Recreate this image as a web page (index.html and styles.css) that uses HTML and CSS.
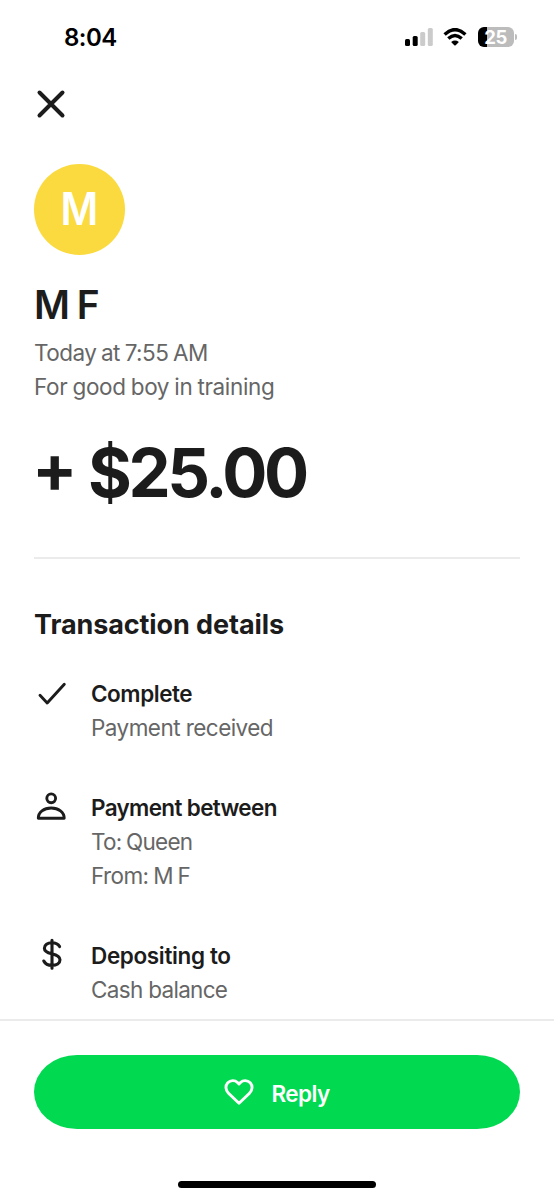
FILE: index.html
```html
<!DOCTYPE html>
<html lang="en">
<head>
<meta charset="utf-8">
<title>Transaction</title>
<link rel="stylesheet" href="styles.css">
</head>
<body>
<div class="screen">
  <header class="status">
    <span class="time">8:04</span>
    <div class="indicators">
      <svg class="signal" width="28" height="18" viewBox="0 0 28 18">
        <rect x="0" y="11" width="5" height="7" rx="1.5"/>
        <rect x="7.7" y="8" width="5" height="10" rx="1.5"/>
        <rect class="dim" x="15.2" y="4" width="5" height="14" rx="1.5"/>
        <rect class="dim" x="22.8" y="0" width="5" height="18" rx="1.5"/>
      </svg>
      <svg class="wifi" width="24" height="18" viewBox="0 0 24 18">
        <path d="M1.6 6.4Q12-3.2 22.4 6.4M5.3 10.6Q12 4.5 18.7 10.6"/>
        <path class="dot" d="M8.1 13.9Q12 11 15.9 13.9L12.7 17.2Q12 17.9 11.3 17.2Z"/>
      </svg>
      <div class="battery"><span class="level">25</span></div>
    </div>
  </header>
  <main class="content">
    <svg class="close" width="34" height="34" viewBox="0 0 34 34"><path d="M5.5 5.5L28.5 28.5M28.5 5.5L5.5 28.5"/></svg>
    <div class="avatar"><span class="initial">M</span></div>
    <h1 class="name">M F</h1>
    <p class="meta when">Today at 7:55 AM</p>
    <p class="meta note">For good boy in training</p>
    <p class="amount"><span class="plus">+</span><span>$25.00</span></p>
    <section class="details">
      <h2 class="heading">Transaction details</h2>
      <div class="row">
        <svg class="icon" width="34" height="34" viewBox="0 0 34 34"><path d="M6 18.3L13.2 26L30.3 7.2"/></svg>
        <div>
          <h3 class="label complete">Complete</h3>
          <p class="meta received">Payment received</p>
        </div>
      </div>
      <div class="row">
        <svg class="icon" width="34" height="34" viewBox="0 0 34 34"><circle cx="17.2" cy="7.3" r="4.4"/><path d="M4.3 27.2H30.2C30.2 21.2 24.6 17 17.2 17S4.3 21.2 4.3 27.2Z"/></svg>
        <div>
          <h3 class="label between">Payment between</h3>
          <p class="meta to">To: Queen</p>
          <p class="meta from">From: M F</p>
        </div>
      </div>
      <div class="row">
        <svg class="icon dollar" width="34" height="34" viewBox="0 0 34 34"><path d="M18 2.2V30.2M25.6 8.6C24.2 6.1 21.6 4.8 17.9 4.8C13.5 4.8 10.4 6.8 10.4 10.2C10.4 13.6 13 14.7 17.8 15.8C22.8 17 26 18.3 26 21.8C26 25.4 22.5 27.4 18.1 27.4C14.1 27.4 11.1 25.7 9.8 23"/></svg>
        <div>
          <h3 class="label deposit">Depositing to</h3>
          <p class="meta cash">Cash balance</p>
        </div>
      </div>
    </section>
  </main>
  <footer class="footer">
    <div class="reply">
      <svg class="heart" width="30" height="28" viewBox="0 0 30 28"><path d="M15 25.3L4.5 15.2C1.2 12 1.2 7.5 3.8 4.7C6.5 2 10.9 1.9 13.5 4.5L15 6L16.5 4.5C19.1 1.9 23.5 2 26.2 4.7C28.8 7.5 28.8 12 25.5 15.2Z"/></svg>
      <span class="reply-text">Reply</span>
    </div>
    <div class="home"></div>
  </footer>
</div>
</body>
</html>
```

FILE: styles.css
```css
* { box-sizing: border-box; margin: 0; padding: 0; }
body { background: #fff; font-family: Inter, "Liberation Sans", sans-serif; color: #1c1c1c; }
svg { display: block; fill: none; flex: none; }
.screen { width: 554px; height: 1200px; display: flex; flex-direction: column; overflow: hidden; }

.status { height: 74px; flex: none; display: flex; justify-content: space-between; align-items: center; padding: 0 40.5px 0 64px; color: #000; }
.time { font-size: 24px; font-weight: 600; letter-spacing: -0.5px; }
.indicators { display: flex; align-items: center; gap: 10.5px; }
.signal { fill: #000; }
.dim { fill: #cbcbcb; }
.wifi { stroke: #000; stroke-width: 3.4; }
.wifi .dot { fill: #000; stroke: none; }
.battery { position: relative; width: 36px; height: 20px; border-radius: 6px; background: linear-gradient(90deg, #000 9px, #bcbcbc 9px); display: flex; align-items: center; justify-content: center; }
.battery::after { content: ""; position: absolute; right: -3px; top: 7px; width: 2px; height: 6px; border-radius: 0 2px 2px 0; background: #bcbcbc; }
.level { color: #fff; font-size: 18.5px; font-weight: 700; line-height: 20px; letter-spacing: -0.6px; }

.content { flex: 1; min-height: 0; padding: 13px 34px 0; overflow: hidden; }
.close { stroke: #1c1c1c; stroke-width: 4; stroke-linecap: round; }
.avatar { width: 91px; height: 91px; margin-top: 43px; border-radius: 50%; background: #fada3e; color: #fff; font-size: 45px; font-weight: 600; line-height: 89px; text-align: center; }
.initial { display: block; transform: scaleX(0.91); }
.name { margin-top: 26px; height: 48px; font-size: 39px; line-height: 48px; font-weight: 600; letter-spacing: -1px; word-spacing: -1px; }
.meta { font-size: 22.5px; line-height: 34px; color: #666; white-space: nowrap; }
.when { margin-top: 7px; letter-spacing: -0.55px; word-spacing: -1px; }
.note { letter-spacing: -0.36px; word-spacing: -0.8px; }
.amount { display: flex; gap: 14px; margin-top: 28px; height: 82px; line-height: 82px; font-size: 67px; font-weight: 700; letter-spacing: -3.4px; white-space: nowrap; }
.plus { margin: -5px 0 0 -2px; }
.details { margin-top: 43px; padding-top: 46px; border-top: 2px solid #ebebeb; display: flex; flex-direction: column; gap: 46px; }
.heading { font-size: 27px; line-height: 40px; font-weight: 700; letter-spacing: -0.1px; margin-bottom: -14px; }
.row { display: flex; gap: 23px; }
.label { font-size: 22.5px; line-height: 34px; font-weight: 600; white-space: nowrap; }
.complete { letter-spacing: -0.46px; }
.received { letter-spacing: -0.55px; }
.between { letter-spacing: -0.66px; }
.to { letter-spacing: -0.75px; word-spacing: -1px; }
.from { letter-spacing: -0.6px; word-spacing: -1px; }
.deposit { letter-spacing: -0.36px; }
.cash { letter-spacing: -0.69px; }
.icon { stroke: #1c1c1c; stroke-width: 2.9; stroke-linecap: round; stroke-linejoin: round; }
.dollar { stroke-width: 3.1; margin-top: -1px; }

.footer { flex: none; height: 181px; border-top: 2px solid #ebebeb; padding: 34px 34px 0; background: #fff; }
.reply { height: 74px; border-radius: 43px / 37px; background: #00d950; display: flex; align-items: center; justify-content: center; gap: 17px; color: #fff; }
.heart { stroke: #fff; stroke-width: 2.9; stroke-linejoin: round; }
.reply-text { font-size: 22.5px; font-weight: 600; letter-spacing: -0.6px; padding-top: 2px; }
.home { width: 198px; height: 7px; margin: 52px auto 0; border-radius: 4px; background: #000; }
```
